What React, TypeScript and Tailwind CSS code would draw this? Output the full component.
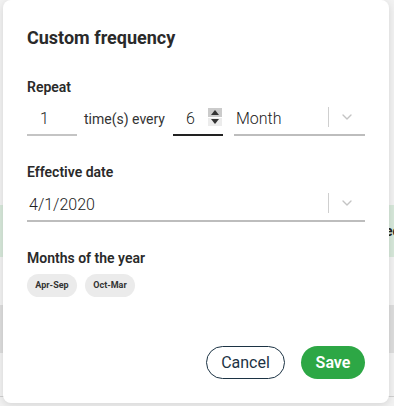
import { ChevronDown } from 'lucide-react';

const font = { fontFamily: 'Roboto, "Liberation Sans", sans-serif' };

function SelectField({ value, className }: { value: string; className: string }) {
  return (
    <div className={`flex items-end h-[32px] border-b-2 border-[#bdbdbd] ${className}`}>
      <span className="flex-1 pl-[2px] text-[16px] leading-[30px] font-light text-[#222]">{value}</span>
      <div className="flex items-center h-[30px] pb-[4px]">
        <span className="w-px h-[20px] bg-[#cfcfcf]" />
        <ChevronDown className="w-[16px] h-[16px] mx-[10px] text-[#c4c4c4]" strokeWidth={2} />
      </div>
    </div>
  );
}

export default function App() {
  return (
    <div className="relative w-[394px] h-[406px] overflow-hidden bg-[#f2f2f2]" style={font}>
      {/* page behind the dialog */}
      <div className="flex flex-col h-full">
        <div className="h-[205px]" />
        <div className="h-[52px] bg-[#d7e8da] flex items-center justify-end">
          <span className="text-[14px] font-bold text-[#222] translate-x-[6px]">ee</span>
        </div>
        <div className="h-[48px]" />
        <div className="h-[48px] bg-[#dddddd]" />
        <div className="h-[44px] border-b border-[#d0d0d0]" />
      </div>

      {/* dialog */}
      <div className="absolute left-[3px] top-0 w-[386px] h-[403px] bg-white rounded-lg shadow-[0_2px_8px_rgba(0,0,0,0.12)] px-6 pt-[27px] flex flex-col">
        <h2 className="text-[18px] leading-[22px] font-bold text-[#2a2a2a]">Custom frequency</h2>

        <div className="mt-[30px] text-[14px] leading-[16px] font-semibold text-[#2a2a2a]">Repeat</div>
        <div className="mt-[9px] flex items-end text-[#222]">
          <div className="w-[50px] h-[32px] border-b-2 border-[#c4c4c4] pl-[13px] text-[16px] leading-[30px] font-light">1</div>
          <span className="ml-[7px] text-[14px] leading-[30px] pb-[2px] text-[#333]">time(s) every</span>
          <div className="ml-[8px] w-[50px] h-[32px] border-b-2 border-[#222] flex items-end">
            <span className="flex-1 pl-[13px] text-[16px] leading-[30px] font-light">6</span>
            <div className="flex flex-col w-[14px] h-[18px] mb-[8px] mr-px">
              <div className="flex-1 bg-[#cbcbcb] flex items-center justify-center">
                <span className="w-0 h-0 border-x-[4px] border-x-transparent border-b-[5px] border-b-[#333]" />
              </div>
              <div className="h-px bg-white" />
              <div className="flex-1 bg-[#ececec] flex items-center justify-center">
                <span className="w-0 h-0 border-x-[4px] border-x-transparent border-t-[5px] border-t-[#333]" />
              </div>
            </div>
          </div>
          <SelectField value="Month" className="ml-[11px] flex-1" />
        </div>

        <div className="mt-[28px] text-[14px] leading-[16px] font-semibold text-[#2a2a2a]">Effective date</div>
        <SelectField value="4/1/2020" className="mt-[10px]" />

        <div className="mt-[28px] text-[14px] leading-[16px] font-semibold text-[#2a2a2a]">Months of the year</div>
        <div className="mt-[8px] flex gap-[8px]">
          {['Apr-Sep', 'Oct-Mar'].map(m => (
            <span key={m} className="w-[50px] h-[23px] rounded-full bg-[#ebebeb] flex items-center justify-center text-[9px] font-bold text-[#333]">
              {m}
            </span>
          ))}
        </div>

        <div className="mt-auto mb-[24px] flex justify-end gap-[16px]">
          <button className="w-[79px] h-[33px] rounded-full border-[1.5px] border-[#1c3344] text-[16px] font-normal text-[#1c3344]">
            Cancel
          </button>
          <button className="w-[64px] h-[33px] rounded-full bg-[#2da745] text-[16px] font-semibold text-white">
            Save
          </button>
        </div>
      </div>
    </div>
  );
}
